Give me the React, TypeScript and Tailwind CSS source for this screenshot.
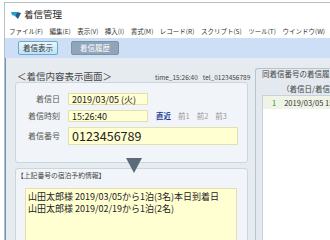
import React from "react";

const font = { fontFamily: '"Noto Sans CJK JP", "Noto Sans", sans-serif' };

const menus = [
  "ファイル(F)",
  "編集(E)",
  "表示(V)",
  "挿入(I)",
  "書式(M)",
  "レコード(R)",
  "スクリプト(S)",
  "ツール(T)",
  "ウインドウ(W)",
];

function AppIcon() {
  return (
    <svg width="12" height="9" viewBox="0 0 12 9">
      <path d="M1 1 L7 1 L5 5 L2 4 Z" fill="#1fa3c9" />
      <path d="M7 1 L11 2 L8 8 L5 5 Z" fill="#1d5f8f" />
    </svg>
  );
}

function Field({ label, children, wide }: { label: string; children: React.ReactNode; wide?: boolean }) {
  return (
    <div className="flex items-center">
      <div className="w-[45px] pr-[1px] text-right text-[8px] text-[#555]">{label}</div>
      <div
        className={
          wide
            ? "ml-[7px] flex h-[18px] w-[170px] items-center border border-[#e3e0b0] bg-[#ffffd2] pl-[3px] text-[12.5px] leading-none text-[#222]"
            : "ml-[7px] flex h-[12px] w-[80px] items-center border border-[#e3e0b0] bg-[#ffffd2] pl-[3px] text-[9px] leading-none text-[#222]"
        }
      >
        {children}
      </div>
    </div>
  );
}

export default function App() {
  return (
    <div className="h-[240px] w-[330px] overflow-hidden bg-white" style={font}>
      <div className="ml-[4px] mt-[2px] flex h-[238px] flex-col border-l border-t border-[#b6c0ca]">
        {/* title */}
        <div className="flex h-[21px] shrink-0 items-center gap-[2px] pl-[5px] pt-[3px]">
          <AppIcon />
          <span className="text-[9.5px] leading-none text-[#222]">着信管理</span>
        </div>
        {/* menu */}
        <div className="flex h-[14px] shrink-0 items-center gap-[6.5px] whitespace-nowrap pl-[4px] text-[6.5px] leading-none text-[#333]">
          {menus.map((m) => (
            <span key={m}>{m}</span>
          ))}
        </div>
        {/* toolbar */}
        <div className="flex h-[20px] shrink-0 items-center gap-[13px] bg-[#cddff6] pl-[13px]">
          <button className="flex h-[14px] w-[40px] items-center justify-center rounded-[2px] border border-[#6fa6c9] bg-gradient-to-b from-[#e8f7fd] to-[#bde3f4] text-[7.5px] leading-none text-[#333]">
            着信表示
          </button>
          <button className="flex h-[14px] w-[48px] items-center justify-center rounded-[2px] border border-[#7d93a8] bg-[#8fa5b9] text-[7.5px] leading-none text-white">
            着信履歴
          </button>
        </div>
        {/* main */}
        <div className="flex flex-1 overflow-hidden border-l border-[#6d93bf] bg-[#e6ebf0]">
          <div className="flex w-[249px] shrink-0 flex-col pl-[9px]">
            <div className="flex h-[24px] shrink-0 items-center pt-[13px]">
              <span className="pl-[2px] text-[9.5px] leading-none text-[#444]">＜着信内容表示画面＞</span>
              <span className="ml-[43px] mt-[2px] text-[6.5px] leading-none text-[#444]">time_15:26:40</span>
              <span className="ml-[5px] mt-[2px] text-[6.5px] leading-none text-[#444]">tel_0123456789</span>
            </div>
            <div className="relative flex h-[81px] w-[233px] shrink-0 flex-col gap-[5px] rounded-[3px] border border-[#cbd5df] bg-[#f1f5f9] pt-[10px]">
              <Field label="着信日">2019/03/05 (火)</Field>
              <div className="flex items-center">
                <Field label="着信時刻">15:26:40</Field>
                <div className="ml-[8px] flex gap-[7px] text-[7.5px] leading-none">
                  <span className="font-bold text-[#1b3d96]">直近</span>
                  <span className="text-[#999]">前1</span>
                  <span className="text-[#999]">前2</span>
                  <span className="text-[#999]">前3</span>
                </div>
              </div>
              <Field label="着信番号" wide>
                0123456789
              </Field>
              <div className="absolute left-[110px] top-[75px] z-10 h-0 w-0 border-x-[8px] border-t-[15px] border-x-transparent border-t-[#5d6b79]" />
            </div>
            <div className="mt-[5px] h-[80px] w-[233px] shrink-0 rounded-[3px] border border-[#cbd5df] bg-[#f1f5f9]">
              <div className="pl-[1px] pt-[3px] text-[6.8px] leading-none text-[#444]">【上記番号の宿泊予約情報】</div>
              <div className="ml-[9px] mt-[9px] h-[70px] w-[212px] border border-[#e3e0b0] bg-[#ffffd2] pl-[2px] pt-[2px] text-[9px] leading-[12px] text-[#222]">
                <div>山田太郎様 2019/03/05から1泊(3名)本日到着日</div>
                <div>山田太郎様 2019/02/19から1泊(2名)</div>
              </div>
            </div>
          </div>
          <div className="mt-[10px] flex min-w-0 flex-1 flex-col overflow-hidden rounded-tl-[3px] border-l border-t border-[#b7c3cf] bg-[#e3e9ef]">
            <div className="whitespace-nowrap pl-[6px] pt-[1px] text-[7.5px] leading-none text-[#444]">同着信番号の着信履歴</div>
            <div className="whitespace-nowrap pl-[26px] pt-[7px] text-[7.5px] leading-none text-[#444]">（着信日/着信時刻）</div>
            <div className="ml-[6px] mt-[3px] flex-1 border-l border-t border-[#c8d2dc] bg-white">
              <div className="flex h-[13px] items-center gap-[8px] whitespace-nowrap bg-[#eef4e6] pl-[9px] text-[7.5px] leading-none">
                <span className="text-[#3f8a28]">1</span>
                <span className="text-[#333]">2019/03/05 15:26</span>
              </div>
            </div>
          </div>
        </div>
      </div>
    </div>
  );
}
